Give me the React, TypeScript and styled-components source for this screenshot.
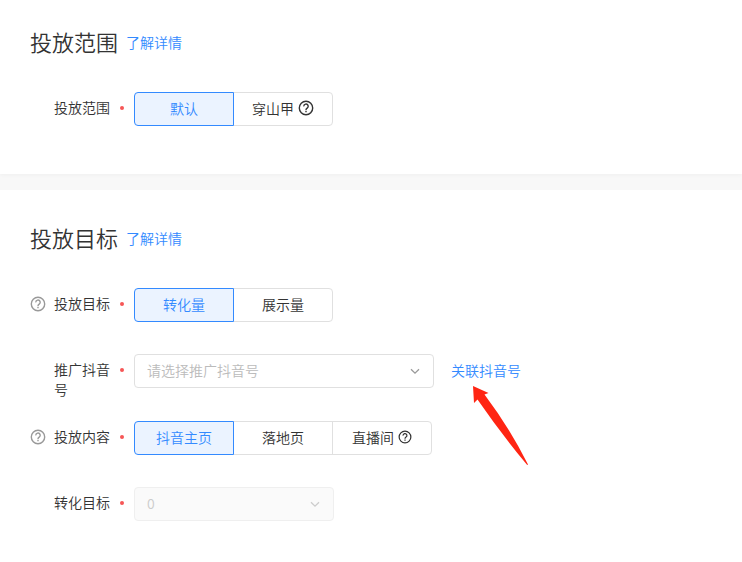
import React, { useState } from "react";
import styled, { createGlobalStyle } from "styled-components";

const GlobalStyle = createGlobalStyle`
  *, *::before, *::after { box-sizing: border-box; }
  body {
    margin: 0;
    background: #fff;
    color: #333;
    font: 350 14px/20px "Noto Sans CJK SC", sans-serif;
  }
`;

const Page = styled.main`
  display: flex;
  flex-direction: column;
  gap: 16px;
  overflow-x: hidden;
  background: #f8f8f8;
`;

const Section = styled.section`
  padding: 26px 30px 48px;
  background: #fff;
  box-shadow: 0 1px 4px rgba(0, 0, 0, 0.04);

  & + & {
    padding-top: 32px;
    padding-bottom: 24px;
    box-shadow: none;
  }
`;

const SectionHeader = styled.header`
  display: flex;
  align-items: center;
  gap: 8px;
  margin-bottom: 34px;
`;

const Title = styled.h2`
  margin: 0;
  padding-bottom: 2px;
  font-size: 22px;
  line-height: 30px;
  font-weight: 350;
`;

const TextLink = styled.a`
  color: #338aff;
  text-decoration: none;
  white-space: nowrap;
`;

const Fields = styled.div`
  display: flex;
  flex-direction: column;
  gap: 20px;
`;

const FieldRow = styled.div`
  display: grid;
  grid-template-columns: 16px 56px 4px minmax(0, 1fr);
  align-items: start;
  min-height: 46px;

  &:only-child { min-height: 34px; }
`;

const HelpSlot = styled.span`
  display: flex;
  padding-top: 8px;
  color: #999;
`;

const FieldLabel = styled.label`
  margin: 5px -8px 0 8px;
  padding-bottom: 2px;
`;

const RequiredDot = styled.span`
  width: 4px;
  height: 4px;
  margin: 14px 0 0 18px;
  border-radius: 50%;
  background: #f65656;
`;

const FieldControl = styled.div`
  display: flex;
  align-items: center;
  gap: 17px;
  margin-left: 28px;
`;

const Segments = styled.div`
  display: flex;
`;

const Segment = styled.label`
  display: flex;
  align-items: center;
  justify-content: center;
  gap: 4px;
  width: 100px;
  height: 34px;
  padding-bottom: 2px;
  border: 1px solid #e0e0e0;
  cursor: pointer;

  & + & { margin-left: -1px; }
  &:first-child { border-radius: 4px 0 0 4px; }
  &:last-child { border-radius: 0 4px 4px 0; }
  &:has(input:checked) {
    z-index: 1;
    border-color: #338aff;
    background: #ebf3ff;
    color: #338aff;
    position: relative;
  }
  &:has(input:focus-visible) { outline: 2px solid #a8ccff; }
`;

const HiddenRadio = styled.input`
  position: absolute;
  width: 1px;
  height: 1px;
  margin: 0;
  opacity: 0;
`;

const SelectFrame = styled.div<{ $wide?: boolean }>`
  display: grid;
  align-items: center;
  width: ${(p) => (p.$wide ? 300 : 200)}px;
  color: #999;

  & > * { grid-area: 1 / 1; }
  & > svg {
    justify-self: end;
    margin-right: 13px;
    pointer-events: none;
  }
  &:has(select:disabled) { color: #ccc; }
`;

const Select = styled.select`
  appearance: none;
  width: 100%;
  height: 34px;
  padding: 0 32px 2px 12px;
  border: 1px solid #e0e0e0;
  border-radius: 4px;
  background: #fff;
  color: #bbb;
  font: inherit;

  &:disabled {
    border-color: #efefef;
    background: #fafafa;
    color: #ccc;
    opacity: 1;
  }
`;

const PointedLink = styled.span`
  position: relative;
  padding-bottom: 2px;
`;

const Arrow = styled.svg`
  position: absolute;
  top: 25px;
  left: 21px;
  pointer-events: none;
`;

function HelpIcon({ size = 16 }: { size?: number }) {
  return (
    <svg width={size} height={size} viewBox="0 0 16 16" fill="none" stroke="currentColor" strokeWidth="1.4" aria-hidden="true">
      <circle cx="8" cy="8" r="6.7" />
      <path d="M5.8 6.4a2.2 2.2 0 1 1 3.4 1.7C8.4 8.6 8 9 8 10" />
      <path d="M8 10.8v1.4" />
    </svg>
  );
}

function Chevron() {
  return (
    <svg width="12" height="12" viewBox="0 0 12 12" fill="none" stroke="currentColor" strokeWidth="1.3" aria-hidden="true">
      <path d="M2 4.2l4 4 4-4" />
    </svg>
  );
}

interface FieldProps {
  label: string;
  id?: string;
  help?: boolean;
  children: React.ReactNode;
}

function Field({ label, id, help, children }: FieldProps) {
  return (
    <FieldRow>
      <HelpSlot>{help && <HelpIcon />}</HelpSlot>
      {id ? (
        <FieldLabel htmlFor={id}>{label}</FieldLabel>
      ) : (
        <FieldLabel as="span">{label}</FieldLabel>
      )}
      <RequiredDot />
      <FieldControl>{children}</FieldControl>
    </FieldRow>
  );
}

interface Option {
  text: string;
  helpSize?: number;
}

function SegmentedField({ name, label, help, options }: { name: string; label: string; help?: boolean; options: Option[] }) {
  const [value, setValue] = useState(options[0].text);
  return (
    <Field label={label} help={help}>
      <Segments role="radiogroup" aria-label={label}>
        {options.map((o) => (
          <Segment key={o.text}>
            <HiddenRadio type="radio" name={name} checked={value === o.text} onChange={() => setValue(o.text)} />
            {o.text}
            {o.helpSize && <HelpIcon size={o.helpSize} />}
          </Segment>
        ))}
      </Segments>
    </Field>
  );
}

export default function App() {
  return (
    <Page>
      <GlobalStyle />
      <Section>
        <SectionHeader>
          <Title>投放范围</Title>
          <TextLink href="#scope">了解详情</TextLink>
        </SectionHeader>
        <Fields>
          <SegmentedField name="scope" label="投放范围" options={[{ text: "默认" }, { text: "穿山甲", helpSize: 16 }]} />
        </Fields>
      </Section>
      <Section>
        <SectionHeader>
          <Title>投放目标</Title>
          <TextLink href="#goal">了解详情</TextLink>
        </SectionHeader>
        <Fields>
          <SegmentedField name="goal" label="投放目标" help options={[{ text: "转化量" }, { text: "展示量" }]} />
          <Field label="推广抖音号" id="account">
            <SelectFrame $wide>
              <Select id="account" defaultValue="">
                <option value="">请选择推广抖音号</option>
              </Select>
              <Chevron />
            </SelectFrame>
            <PointedLink>
              <TextLink href="#link-account">关联抖音号</TextLink>
              <Arrow width="60" height="84" viewBox="0 0 60 84" fill="#ff2513" aria-hidden="true">
                <path d="M1 1 L16.5 8 L12.5 9.5 Q37 42 56 79.5 L55.2 80 Q30 50 5.5 14.5 L2 18 Z" />
              </Arrow>
            </PointedLink>
          </Field>
          <SegmentedField
            name="content"
            label="投放内容"
            help
            options={[{ text: "抖音主页" }, { text: "落地页" }, { text: "直播间", helpSize: 14 }]}
          />
          <Field label="转化目标" id="conversion">
            <SelectFrame>
              <Select id="conversion" disabled defaultValue="0">
                <option value="0">0</option>
              </Select>
              <Chevron />
            </SelectFrame>
          </Field>
        </Fields>
      </Section>
    </Page>
  );
}
